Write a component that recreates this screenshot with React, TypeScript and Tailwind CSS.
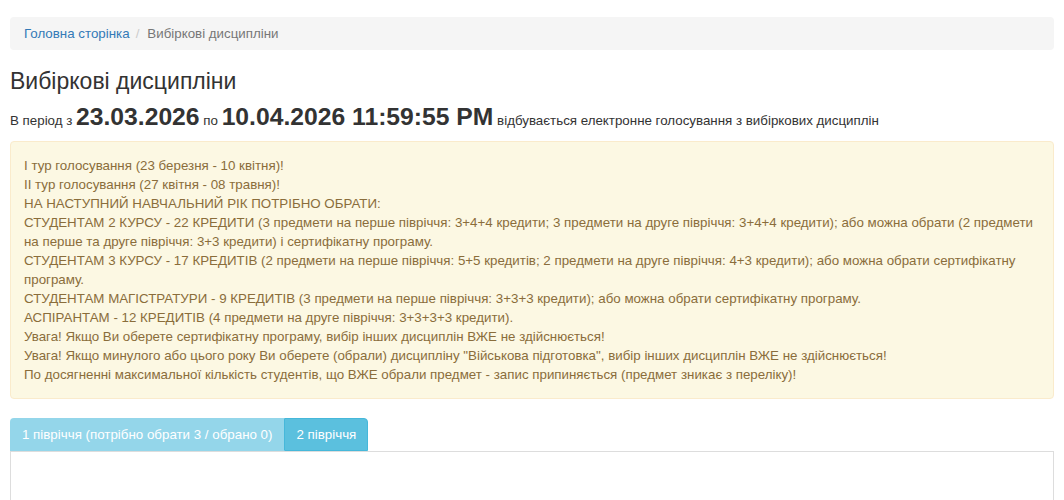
export default function App() {
  const lines = [
    "І тур голосування (23 березня - 10 квітня)!",
    "ІІ тур голосування (27 квітня - 08 травня)!",
    "НА НАСТУПНИЙ НАВЧАЛЬНИЙ РІК ПОТРІБНО ОБРАТИ:",
    "СТУДЕНТАМ 2 КУРСУ - 22 КРЕДИТИ (3 предмети на перше півріччя: 3+4+4 кредити; 3 предмети на друге півріччя: 3+4+4 кредити); або можна обрати (2 предмети на перше та друге півріччя: 3+3 кредити) і сертифікатну програму.",
    "СТУДЕНТАМ 3 КУРСУ - 17 КРЕДИТІВ (2 предмети на перше півріччя: 5+5 кредитів; 2 предмети на друге півріччя: 4+3 кредити); або можна обрати сертифікатну програму.",
    "СТУДЕНТАМ МАГІСТРАТУРИ - 9 КРЕДИТІВ (3 предмети на перше півріччя: 3+3+3 кредити); або можна обрати сертифікатну програму.",
    "АСПІРАНТАМ - 12 КРЕДИТІВ (4 предмети на друге півріччя: 3+3+3+3 кредити).",
    "Увага! Якщо Ви оберете сертифікатну програму, вибір інших дисциплін ВЖЕ не здійснюється!",
    "Увага! Якщо минулого або цього року Ви оберете (обрали) дисципліну \"Військова підготовка\", вибір інших дисциплін ВЖЕ не здійснюється!",
    "По досягненні максимальної кількість студентів, що ВЖЕ обрали предмет - запис припиняється (предмет зникає з переліку)!",
  ];

  return (
    <div className="min-h-[500px] bg-white px-[10px] font-['Liberation_Sans',Arial,sans-serif] text-[13.33px] leading-[19px] text-[#333]">
      <nav className="mt-[17px] flex h-[33px] items-center rounded-[4px] bg-[#f5f5f5] px-[14px]">
        <a href="#" className="text-[#337ab7]">
          Головна сторінка
        </a>
        <span className="pl-[6px] pr-[8px] text-[#ccc]">/</span>
        <span className="text-[#777]">Вибіркові дисципліни</span>
      </nav>

      <h1 className="mt-[18px] text-[23px] leading-[26px] font-normal">Вибіркові дисципліни</h1>

      <div className="mt-[10px]">
        В період з <span className="text-[24.7px] leading-[26px] font-bold">23.03.2026</span> по{" "}
        <span className="text-[24.7px] leading-[26px] font-bold">10.04.2026 11:59:55 PM</span> відбувається
        електронне голосування з вибіркових дисциплін
      </div>

      <div className="mt-[11px] rounded-[4px] border border-[#faebcc] bg-[#fcf8e3] px-[13px] py-[14px] text-[#8a6d3b]">
        {lines.map((l, i) => (
          <div key={i}>{l}</div>
        ))}
      </div>

      <div className="mt-[19px] flex">
        <button className="h-[33px] rounded-tl-[4px] bg-[#94d6ea] px-[12px] text-white">
          1 півріччя (потрібно обрати 3 / обрано 0)
        </button>
        <button className="h-[33px] rounded-tr-[4px] border border-[#46b8da] bg-[#5bc0de] px-[11px] text-white">
          2 півріччя
        </button>
      </div>
      <div className="h-[60px] border border-[#ddd]"></div>
    </div>
  );
}
